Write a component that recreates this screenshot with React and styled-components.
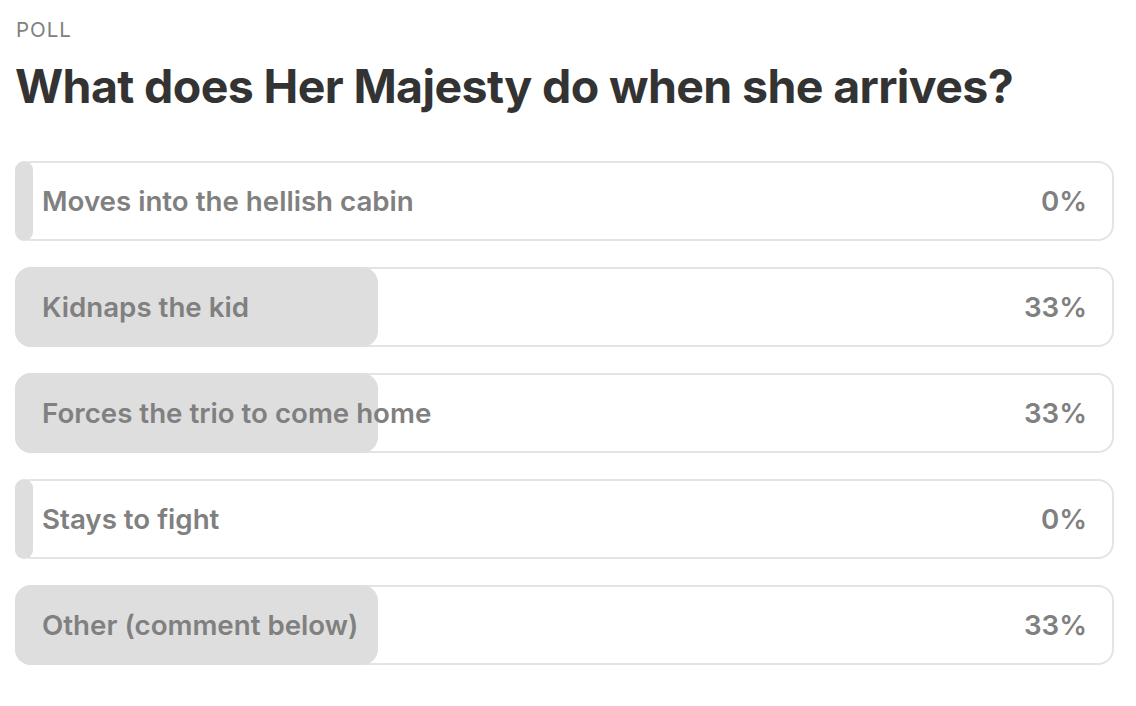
import React from "react";
import styled, { createGlobalStyle } from "styled-components";

const GlobalStyle = createGlobalStyle`
  body {
    margin: 0;
    background-color: #ffffff;
    font-family: Inter, "Noto Sans", sans-serif;
  }
`;

const Page = styled.div`
  padding: 18px 22px 0 15px;
`;

const Label = styled.div`
  font-size: 20.5px;
  letter-spacing: 1px;
  color: #808080;
  line-height: 24px;
  padding-left: 1px;
`;

const Title = styled.h1`
  margin: 14px 0 0 0;
  font-size: 46.5px;
  font-weight: 700;
  line-height: 60px;
  color: #333333;
  letter-spacing: -0.63px;
`;

const Options = styled.div`
  display: flex;
  flex-direction: column;
  gap: 26px;
  margin-top: 45px;
`;

const Option = styled.div`
  display: grid;
  height: 80px;
  & > * {
    grid-area: 1 / 1;
  }
`;

const Outline = styled.div`
  border: 2px solid #e4e4e4;
  border-radius: 16px;
`;

const Fill = styled.div`
  background-color: #dedede;
  border-radius: 16px;
  min-width: 18px;
`;

const Content = styled.div`
  display: flex;
  align-items: center;
  justify-content: space-between;
  padding: 0 27px 0 27px;
  font-size: 27.7px;
  font-weight: 600;
  color: #808080;
`;

const options = [
  { text: "Moves into the hellish cabin", pct: 0 },
  { text: "Kidnaps the kid", pct: 33 },
  { text: "Forces the trio to come home", pct: 33 },
  { text: "Stays to fight", pct: 0 },
  { text: "Other (comment below)", pct: 33 },
];

const App = () => (
  <Page>
    <GlobalStyle />
    <Label>POLL</Label>
    <Title>What does Her Majesty do when she arrives?</Title>
    <Options>
      {options.map((o) => (
        <Option key={o.text}>
          <Outline />
          <Fill style={{ width: `${o.pct}%` }} />
          <Content>
            <span>{o.text}</span>
            <span>{o.pct}%</span>
          </Content>
        </Option>
      ))}
    </Options>
  </Page>
);

export default App;
